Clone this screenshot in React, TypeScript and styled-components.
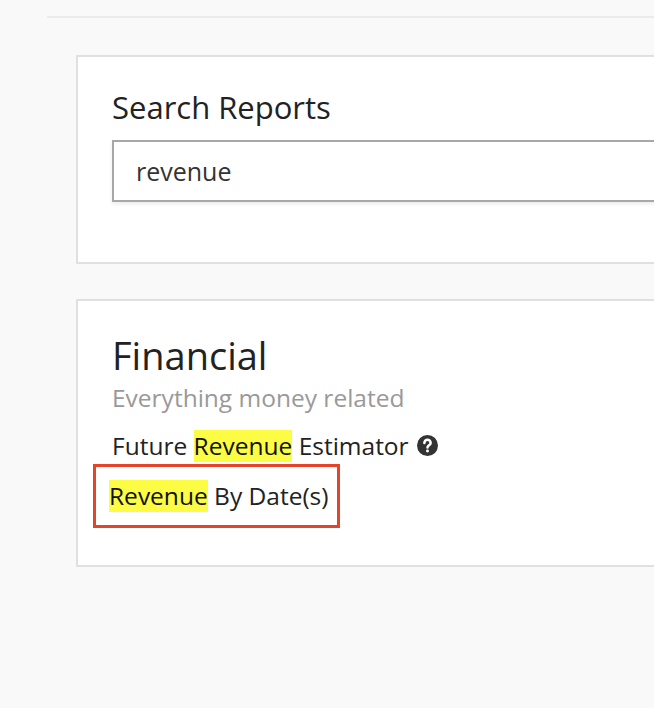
import React from "react";
import styled, { createGlobalStyle } from "styled-components";

const Global = createGlobalStyle`
  html, body { margin: 0; background: #f9f9f9; overflow: hidden; }
  body { font-family: "Open Sans", "Noto Sans", sans-serif; color: #222; }
`;

const Page = styled.div`
  width: 760px;
  padding: 16px 0 0 47px;
`;
const TopRule = styled.div`
  height: 2px;
  background: #ebebeb;
`;
const Content = styled.div`
  padding: 37px 0 0 29px;
  display: flex;
  flex-direction: column;
  gap: 35px;
`;
const Card = styled.section<{ $pad: string }>`
  background: #fff;
  border: 2px solid #e0e0e0;
  border-right: none;
  padding: ${(p) => p.$pad};
`;
const CardTitle = styled.h2<{ $size: number }>`
  margin: 0;
  font-weight: 400;
  font-size: ${(p) => p.$size}px;
  line-height: 1.2;
  color: #222;
`;
const SearchInput = styled.input`
  display: block;
  box-sizing: border-box;
  width: 100%;
  height: 62px;
  margin-top: 14px;
  border: 2px solid #a8a8a8;
  padding: 0 22px;
  font: inherit;
  font-size: 25px;
  color: #333;
  box-shadow: 0 2px 4px rgba(0,0,0,0.08);
  outline: none;
`;
const Subtitle = styled.div`
  font-size: 24.5px;
  color: #999;
  margin-top: 2px;
`;
const Item = styled.div<{ $boxed?: boolean }>`
  display: inline-flex;
  align-items: center;
  align-self: flex-start;
  font-size: 24.5px;
  line-height: 32px;
  color: #222;
  ${(p) =>
    p.$boxed
      ? `border: 3px solid #e5432a; padding: 13px 8px 13px 13px; margin: 2px 0 0 -19px;`
      : `margin-top: 16px;`}
`;
const Mark = styled.mark`
  background: #fcfc45;
  color: #111;
  padding: 0;
`;
const Items = styled.div`
  display: flex;
  flex-direction: column;
`;
const Help = () => (
  <svg width="21" height="21" viewBox="0 0 20 20" style={{ marginLeft: 8 }}>
    <circle cx="10" cy="10" r="10" fill="#333" />
    <path d="M7 7.6a3 3 0 0 1 6 0c0 2-3 2.2-3 4.2" stroke="#fff" strokeWidth="2.4" fill="none" strokeLinecap="round" />
    <circle cx="10" cy="15.3" r="1.4" fill="#fff" />
  </svg>
);

export default function App() {
  return (
    <>
      <Global />
      <Page>
        <TopRule />
        <Content>
          <Card $pad="32px 0 60px 34px">
            <CardTitle $size={31}>Search Reports</CardTitle>
            <SearchInput defaultValue="revenue" />
          </Card>
          <Card $pad="32px 0 37px 34px">
            <CardTitle $size={38}>Financial</CardTitle>
            <Subtitle>Everything money related</Subtitle>
            <Items>
              <Item>
                Future&nbsp;<Mark>Revenue</Mark>&nbsp;Estimator
                <Help />
              </Item>
              <Item $boxed>
                <Mark>Revenue</Mark>&nbsp;By Date(s)
              </Item>
            </Items>
          </Card>
        </Content>
      </Page>
    </>
  );
}
